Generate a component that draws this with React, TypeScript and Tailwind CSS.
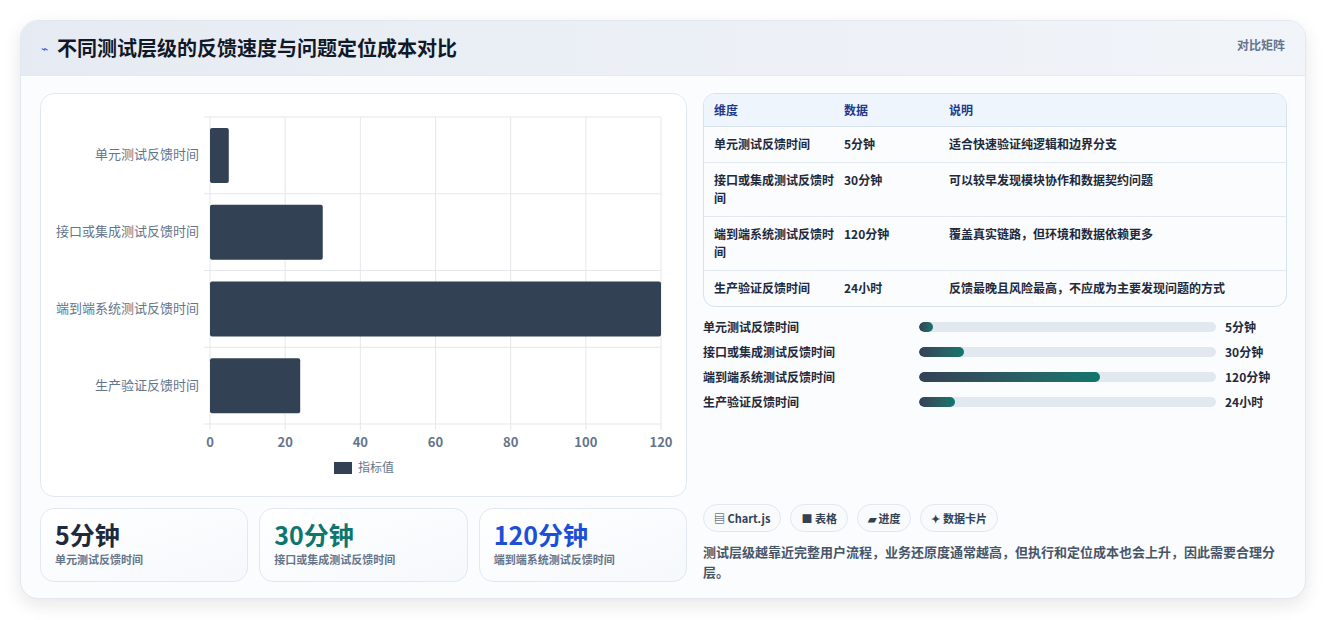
export default function App() {
  const font = { fontFamily: '"Noto Sans CJK SC", "Noto Sans", sans-serif' };
  const rows = [
    ["单元测试反馈时间", "5分钟", "适合快速验证纯逻辑和边界分支"],
    ["接口或集成测试反馈时间", "30分钟", "可以较早发现模块协作和数据契约问题"],
    ["端到端系统测试反馈时间", "120分钟", "覆盖真实链路，但环境和数据依赖更多"],
    ["生产验证反馈时间", "24小时", "反馈最晚且风险最高，不应成为主要发现问题的方式"],
  ];
  const vals = [5, 30, 120, 24];
  const prog = [4.7, 15, 61, 12];
  const px0 = 169, px1 = 620, py0 = 23, py1 = 330;
  const sx = (v: number) => px0 + (v / 120) * (px1 - px0);
  const rh = (py1 - py0) / 4;
  return (
    <div className="w-[1327px] h-[620px] bg-white pt-[20px] px-[20px]" style={font}>
      <div className="w-[1286px] h-[579px] rounded-[18px] border border-[#e2e8f0] bg-[#fbfcfe] shadow-[0_6px_18px_rgba(15,23,42,0.10)] overflow-hidden">
        <div className="h-[55px] flex items-center justify-between pl-[20px] pr-[20px] bg-gradient-to-r from-[#e6ebf3] to-[#f1f4f9] border-b border-[#e5e9f0]">
          <div className="flex items-center gap-[9px]">
            <span className="text-[#3b5bdb] text-[12px]">⌁</span>
            <span className="text-[20px] font-bold text-[#111827]">不同测试层级的反馈速度与问题定位成本对比</span>
          </div>
          <span className="text-[12px] text-[#64748b] font-semibold self-start mt-[15px]">对比矩阵</span>
        </div>
        <div className="flex gap-[16px] pl-[19px] pr-[18px] pt-[17px]">
          <div className="w-[647px] flex flex-col gap-[11px]">
            <div className="h-[404px] rounded-[14px] border border-[#e2e8f0] bg-white">
              <svg width="646" height="403">
                {[0, 20, 40, 60, 80, 100, 120].map((t) => (
                  <g key={t}>
                    <line x1={sx(t)} x2={sx(t)} y1={py0} y2={py1 + 6} stroke="#e5e7eb" />
                    <text x={sx(t)} y={353} textAnchor="middle" fontSize="13" fill="#64748b" fontWeight="600">{t}</text>
                  </g>
                ))}
                {[0, 1, 2, 3, 4].map((i) => (
                  <line key={i} x1={px0 - 6} x2={px1} y1={py0 + i * rh} y2={py0 + i * rh} stroke="#e5e7eb" />
                ))}
                {rows.map((r, i) => (
                  <g key={i}>
                    <rect x={px0} y={py0 + i * rh + 11} width={sx(vals[i]) - px0} height={55} rx="2" fill="#334155" />
                    <text x={158} y={py0 + i * rh + rh / 2 + 4} textAnchor="end" fontSize="13" fill="#64748b">{r[0]}</text>
                  </g>
                ))}
                <rect x="293" y="368" width="18" height="12" fill="#334155" />
                <text x="317" y="378" fontSize="12" fill="#64748b">指标值</text>
              </svg>
            </div>
            <div className="grid grid-cols-3 gap-[11px]">
              {[["5分钟", "text-[#1e293b]"], ["30分钟", "text-[#0f766e]"], ["120分钟", "text-[#1d4ed8]"]].map(([v, c], i) => (
                <div key={i} className="h-[74px] rounded-[14px] border border-[#e2e8f0] bg-gradient-to-br from-white to-[#f5f8fc] px-[14px] pt-[8px]">
                  <div className={`text-[25px] font-bold leading-[34px] ${c}`}>{v}</div>
                  <div className="text-[11px] text-[#64748b] font-semibold">{rows[i][0]}</div>
                </div>
              ))}
            </div>
          </div>
          <div className="flex-1 flex flex-col h-[489px]">
            <div className="rounded-[12px] border border-[#d6e2f0] bg-[#fafcfe] overflow-hidden text-[12px] text-[#1e293b] font-semibold">
              <div className="flex h-[33px] items-center bg-[#eef5fd] border-b border-[#d6e2f0] text-[#1e3a8a]">
                <div className="w-[140px] pl-[10px]">维度</div>
                <div className="w-[105px]">数据</div>
                <div className="flex-1">说明</div>
              </div>
              {rows.map((r, i) => (
                <div key={i} className={`flex pt-[8px] pb-[9px] leading-[18px] ${i < 3 ? "border-b border-[#e2e8f0]" : ""}`}>
                  <div className="w-[140px] pl-[10px] pr-[8px]">{r[0]}</div>
                  <div className="w-[105px]">{r[1]}</div>
                  <div className="flex-1">{r[2]}</div>
                </div>
              ))}
            </div>
            <div className="flex flex-col gap-[7px] mt-[11px] text-[12px] font-semibold text-[#1e293b]">
              {rows.map((r, i) => (
                <div key={i} className="flex items-center h-[18px]">
                  <div className="w-[216px]">{r[0]}</div>
                  <div className="w-[297px] h-[10px] rounded-full bg-[#e2e8f0] overflow-hidden">
                    <div className="h-full rounded-full bg-gradient-to-r from-[#334155] to-[#0f766e]" style={{ width: `${prog[i]}%` }} />
                  </div>
                  <div className="ml-[9px]">{r[1]}</div>
                </div>
              ))}
            </div>
            <div className="mt-auto">
              <div className="flex gap-[9px] text-[11px] font-semibold text-[#334155]">
                {["▤ Chart.js", "■ 表格", "▰ 进度", "✦ 数据卡片"].map((c) => (
                  <span key={c} className="h-[28px] px-[10px] flex items-center rounded-full border border-[#e2e8f0] bg-[#f8fafc]">{c}</span>
                ))}
              </div>
              <p className="mt-[10px] text-[13px] leading-[20px] text-[#475569] font-semibold pr-[12px]">
                测试层级越靠近完整用户流程，业务还原度通常越高，但执行和定位成本也会上升，因此需要合理分层。
              </p>
            </div>
          </div>
        </div>
      </div>
    </div>
  );
}
